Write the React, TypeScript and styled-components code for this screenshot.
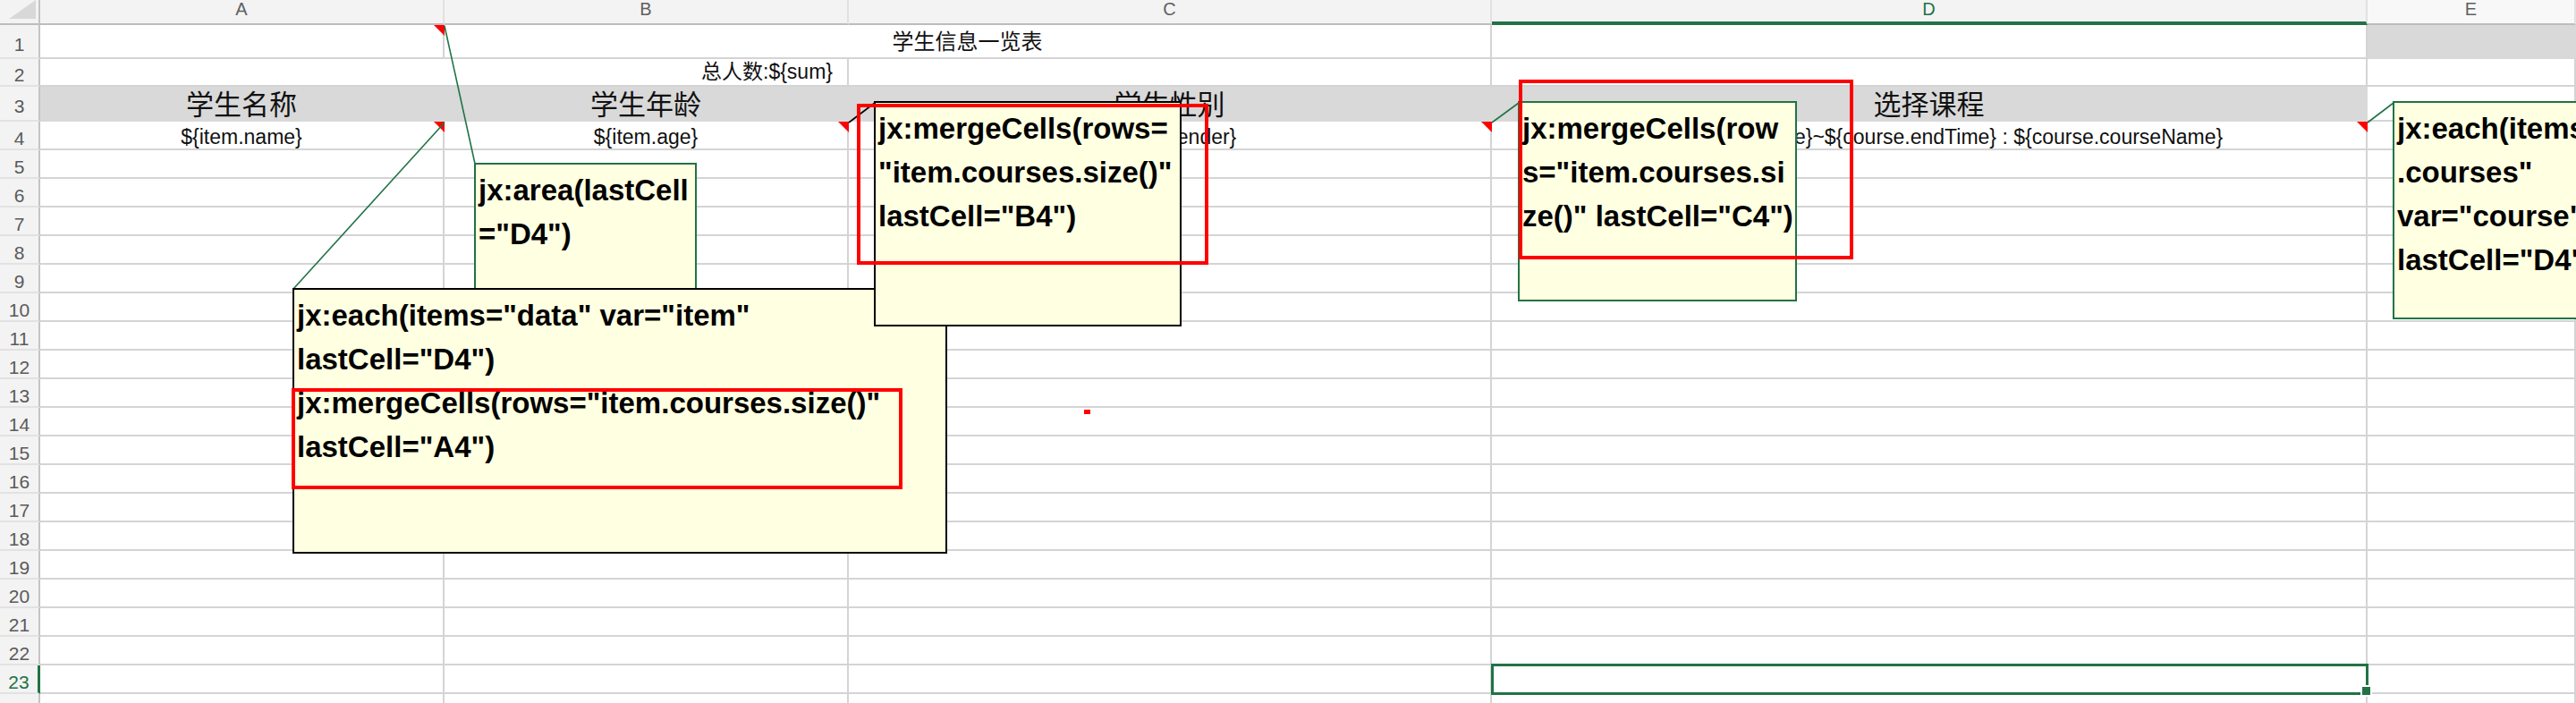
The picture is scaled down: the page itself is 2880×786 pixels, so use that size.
import React from "react";
import styled, { createGlobalStyle } from "styled-components";

const GREEN = "#217346";
const GRID = "#d4d4d4";
const BAND = "#d9d9d9";
const FONT = `"Liberation Sans", "Noto Sans CJK SC", sans-serif`;

const Global = createGlobalStyle`
  *, *::before, *::after { box-sizing: border-box; }
  html, body { margin: 0; padding: 0; background: #fff; overflow: hidden; }
  body { width: 2880px; height: 786px; }
`;

const Sheet = styled.div`
  position: relative;
  width: 2880px;
  height: 786px;
  overflow: hidden;
  font-family: ${FONT};
`;

const Grid = styled.div`
  display: grid;
  grid-template-columns: 45px 452px 452px 719px 979px 233px;
  grid-template-rows: 28px 38px 31px 39px repeat(21, 32px);
`;

const Corner = styled.div`
  position: relative;
  background: #f3f3f3;
  border-right: 2px solid #c4c4c4;
  border-bottom: 2px solid #bdbdbd;
  &::after {
    content: "";
    position: absolute;
    left: 10px;
    top: 0;
    width: 30px;
    height: 21px;
    background: #d8d8d8;
    clip-path: polygon(100% 0, 100% 100%, 0 100%);
  }
`;

const ColHeader = styled.div<{ $selected?: boolean; $light?: boolean }>`
  display: flex;
  justify-content: center;
  align-items: flex-start;
  background: ${(p) => (p.$light ? "#f8f8f8" : "#f3f3f3")};
  border-right: 2px solid #e1e1e1;
  border-bottom: ${(p) => (p.$selected ? `4px solid ${GREEN}` : "2px solid #bdbdbd")};
  color: ${(p) => (p.$selected ? GREEN : "#606060")};
  font-size: 20px;
  line-height: 20px;
  margin-top: 0;
`;

const RowHeader = styled.div<{ $selected?: boolean }>`
  display: flex;
  justify-content: center;
  align-items: center;
  padding-top: 6px;
  background: #f3f3f3;
  border-right: ${(p) => (p.$selected ? `3px solid ${GREEN}` : "2px solid #c4c4c4")};
  border-bottom: 2px solid #e2e2e2;
  color: ${(p) => (p.$selected ? GREEN : "#5a5a5a")};
  font-size: 21px;
  line-height: 1;
`;

const Cell = styled.div<{
  $span?: number;
  $fill?: boolean;
  $align?: "center" | "flex-end";
  $size?: number;
  $padTop?: number;
  $padRight?: number;
}>`
  position: relative;
  display: flex;
  align-items: center;
  justify-content: ${(p) => p.$align ?? "center"};
  grid-column: span ${(p) => p.$span ?? 1};
  background: ${(p) => (p.$fill ? BAND : "#fff")};
  border-right: 2px solid ${(p) => (p.$fill ? BAND : GRID)};
  border-bottom: 2px solid ${(p) => (p.$fill ? BAND : GRID)};
  padding-top: ${(p) => p.$padTop ?? 0}px;
  padding-right: ${(p) => p.$padRight ?? 0}px;
  font-size: ${(p) => p.$size ?? 22}px;
  line-height: 1;
  color: #111;
  white-space: nowrap;
`;

const Indicator = styled.span`
  position: absolute;
  top: 0;
  right: -2px;
  width: 12px;
  height: 12px;
  background: #ff0000;
  clip-path: polygon(0 0, 100% 0, 100% 100%);
  z-index: 1;
`;

const Selection = styled.span`
  position: absolute;
  left: -1px;
  top: -2px;
  right: -3px;
  bottom: -3px;
  border: 3px solid ${GREEN};
  pointer-events: none;
  z-index: 2;
`;

const FillHandle = styled.span`
  position: absolute;
  right: -7px;
  bottom: -5px;
  width: 13px;
  height: 13px;
  background: ${GREEN};
  border: 2px solid #fff;
  z-index: 3;
`;

const Connectors = styled.svg`
  position: absolute;
  left: 0;
  top: 0;
  width: 2880px;
  height: 786px;
  pointer-events: none;
  z-index: 5;
`;

const Note = styled.div<{ $x: number; $y: number; $w: number; $h: number; $dark?: boolean; $z: number }>`
  position: absolute;
  left: ${(p) => p.$x}px;
  top: ${(p) => p.$y}px;
  width: ${(p) => p.$w}px;
  height: ${(p) => p.$h}px;
  z-index: ${(p) => p.$z};
  background: #ffffe1;
  border: 2px solid ${(p) => (p.$dark ? "#000" : GREEN)};
  padding: 4px 3px;
  font-family: "Liberation Sans", sans-serif;
  font-weight: bold;
  font-size: 33px;
  line-height: 49px;
  color: #000;
  white-space: nowrap;
`;

const NoteLine = styled.div`
  display: block;
`;

const Highlight = styled.div<{ $x: number; $y: number; $w: number; $h: number }>`
  position: absolute;
  left: ${(p) => p.$x}px;
  top: ${(p) => p.$y}px;
  width: ${(p) => p.$w}px;
  height: ${(p) => p.$h}px;
  border: 4px solid #ff0000;
  z-index: 20;
  pointer-events: none;
`;

const Speck = styled.div`
  position: absolute;
  left: 1212px;
  top: 458px;
  width: 7px;
  height: 5px;
  background: #ff0000;
  z-index: 6;
`;

type NoteSpec = {
  x: number;
  y: number;
  w: number;
  h: number;
  dark?: boolean;
  z: number;
  lines: string[];
};

const notes: NoteSpec[] = [
  { x: 530, y: 182, w: 249, h: 170, z: 10, lines: ["jx:area(lastCell", '="D4")'] },
  {
    x: 327,
    y: 322,
    w: 732,
    h: 297,
    z: 11,
    dark: true,
    lines: [
      'jx:each(items="data" var="item"',
      'lastCell="D4")',
      'jx:mergeCells(rows="item.courses.size()"',
      'lastCell="A4")',
    ],
  },
  {
    x: 977,
    y: 113,
    w: 344,
    h: 252,
    z: 12,
    dark: true,
    lines: ["jx:mergeCells(rows=", '"item.courses.size()"', 'lastCell="B4")'],
  },
  {
    x: 1697,
    y: 113,
    w: 312,
    h: 224,
    z: 12,
    lines: ["jx:mergeCells(row", 's="item.courses.si', 'ze()" lastCell="C4")'],
  },
  {
    x: 2675,
    y: 113,
    w: 400,
    h: 244,
    z: 12,
    lines: ['jx:each(items="item', '.courses"', 'var="course"', 'lastCell="D4")'],
  },
];

const highlights = [
  { x: 958, y: 116, w: 393, h: 180 },
  { x: 326, y: 434, w: 683, h: 113 },
  { x: 1698, y: 89, w: 374, h: 201 },
];

const links = [
  { x1: 497, y1: 29, x2: 531, y2: 183, c: GREEN },
  { x1: 497, y1: 137, x2: 328, y2: 323, c: GREEN },
  { x1: 949, y1: 137, x2: 978, y2: 115, c: "#000" },
  { x1: 1668, y1: 137, x2: 1698, y2: 115, c: GREEN },
  { x1: 2647, y1: 137, x2: 2676, y2: 115, c: GREEN },
];

const COLS = ["A", "B", "C", "D", "E"];

function EmptyRow({ n }: { n: number }) {
  const sel = n === 23;
  return (
    <>
      <RowHeader $selected={sel}>{n}</RowHeader>
      {COLS.map((c) => (
        <Cell key={c}>
          {sel && c === "D" && (
            <>
              <Selection />
              <FillHandle />
            </>
          )}
        </Cell>
      ))}
    </>
  );
}

export default function App() {
  const rest: number[] = [];
  for (let i = 5; i <= 24; i++) rest.push(i);
  return (
    <>
      <Global />
      <Sheet>
        <Grid>
          <Corner />
          {COLS.map((c) => (
            <ColHeader key={c} $selected={c === "D"} $light={c === "E"}>
              {c}
            </ColHeader>
          ))}

          <RowHeader>1</RowHeader>
          <Cell>
            <Indicator />
          </Cell>
          <Cell $span={2} $size={24} $padTop={1}>
            学生信息一览表
          </Cell>
          <Cell />
          <Cell $fill />

          <RowHeader>2</RowHeader>
          <Cell $span={2} $align="flex-end" $padRight={16} $size={23}>
            {"总人数:${sum}"}
          </Cell>
          <Cell />
          <Cell />
          <Cell />

          <RowHeader>3</RowHeader>
          <Cell $fill $size={31} $padTop={4}>
            学生名称
          </Cell>
          <Cell $fill $size={31} $padTop={4}>
            学生年龄
          </Cell>
          <Cell $fill $size={31} $padTop={4}>
            学生性别
          </Cell>
          <Cell $fill $size={31} $padTop={4}>
            选择课程
          </Cell>
          <Cell />

          <RowHeader>4</RowHeader>
          <Cell $size={23} $padTop={4}>
            {"${item.name}"}
            <Indicator />
          </Cell>
          <Cell $size={23} $padTop={4}>
            {"${item.age}"}
            <Indicator />
          </Cell>
          <Cell $size={23} $padTop={4}>
            {"${item.gender}"}
            <Indicator />
          </Cell>
          <Cell $size={23} $padTop={4}>
            {"${course.startTime}~${course.endTime} : ${course.courseName}"}
            <Indicator />
          </Cell>
          <Cell />

          {rest.map((n) => (
            <EmptyRow key={n} n={n} />
          ))}
        </Grid>

        <Connectors viewBox="0 0 2880 786">
          {links.map((l, i) => (
            <line key={i} x1={l.x1} y1={l.y1} x2={l.x2} y2={l.y2} stroke={l.c} strokeWidth={1.6} />
          ))}
        </Connectors>

        {notes.map((n, i) => (
          <Note key={i} $x={n.x} $y={n.y} $w={n.w} $h={n.h} $dark={n.dark} $z={n.z}>
            {n.lines.map((t, j) => (
              <NoteLine key={j}>{t}</NoteLine>
            ))}
          </Note>
        ))}

        {highlights.map((h, i) => (
          <Highlight key={i} $x={h.x} $y={h.y} $w={h.w} $h={h.h} />
        ))}

        <Speck />
      </Sheet>
    </>
  );
}
